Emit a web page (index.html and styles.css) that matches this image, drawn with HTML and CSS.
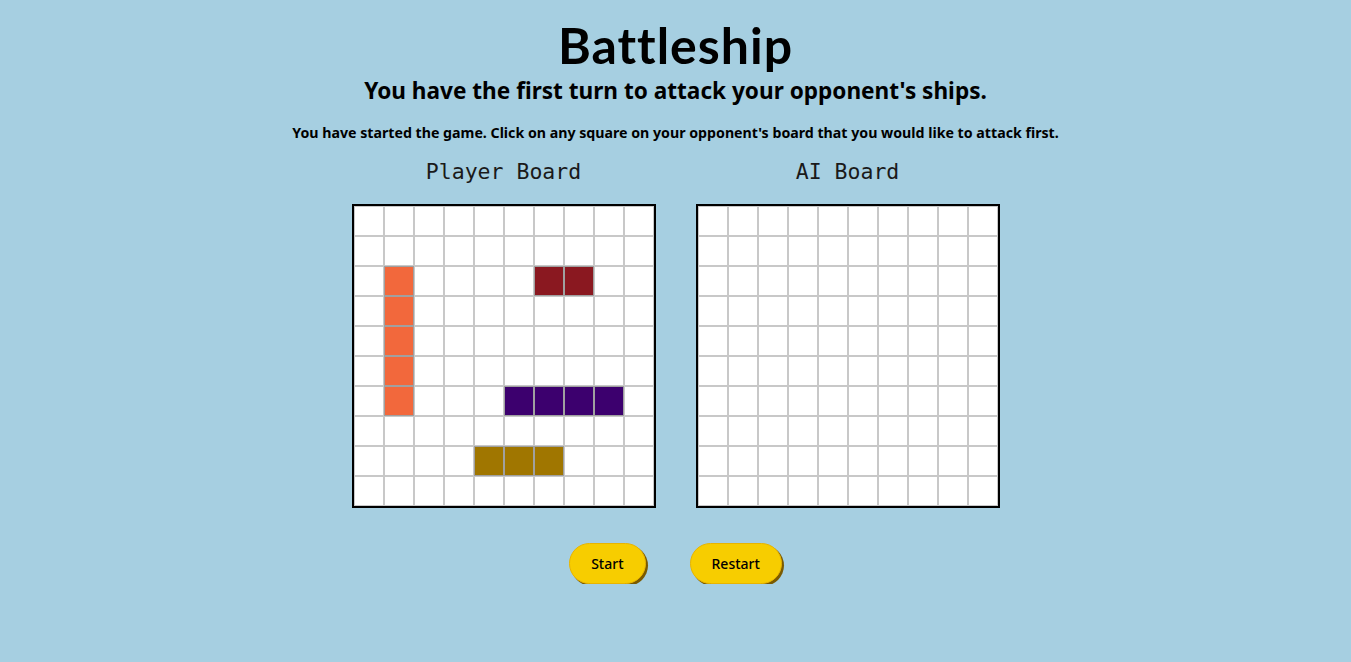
FILE: index.html
```html
<!DOCTYPE html>
<html>
<head>
<meta charset="utf-8">
<link rel="stylesheet" href="styles.css">
</head>
<body>
<main class="page">
  <h1 class="title">Battleship</h1>
  <h2 class="subtitle">You have the first turn to attack your opponent's ships.</h2>
  <p class="message">You have started the game. Click on any square on your opponent's board that you would like to attack first.</p>
  <div class="boards">
    <section class="board-wrap">
      <h3 class="board-label">Player Board</h3>
      <div class="board" id="player"></div>
    </section>
    <section class="board-wrap">
      <h3 class="board-label">AI Board</h3>
      <div class="board" id="ai"></div>
    </section>
  </div>
  <div class="buttons">
    <button class="btn">Start</button>
    <button class="btn">Restart</button>
  </div>
</main>
<script src="script.js"></script>
</body>
</html>
```
FILE: styles.css
```css
html, body {
  margin: 0;
  padding: 0;
  background: #a6cfe1;
}
.page {
  display: flex;
  flex-direction: column;
  align-items: center;
  font-family: "Noto Sans", "Lato", sans-serif;
  color: #000;
}
.title {
  margin: 14px 0 0;
  font-family: "Lato", sans-serif;
  font-size: 50px;
  font-weight: 700;
  line-height: 62px;
  letter-spacing: 1px;
}
.subtitle {
  margin: 0;
  font-size: 22.6px;
  font-weight: 700;
  line-height: 30px;
}
.message {
  margin: 18px 0 0;
  font-size: 14.2px;
  font-weight: 700;
  line-height: 18px;
}
.boards {
  display: flex;
  gap: 40px;
  margin-top: 17px;
}
.board-wrap {
  display: flex;
  flex-direction: column;
  align-items: center;
}
.board-label {
  margin: 0 0 19px;
  font-family: "DejaVu Sans Mono", monospace;
  font-weight: 400;
  font-size: 21.5px;
  line-height: 26px;
  color: #1a1a1a;
}
.board {
  display: grid;
  grid-template-columns: repeat(10, 30px);
  grid-template-rows: repeat(10, 30px);
  border: 2px solid #000;
  background: #fff;
}
.cell {
  box-sizing: border-box;
  border: 1px solid #c8c8c8;
  background: #fff;
}
.cell.ship-a { background: #f2683c; border-color: #a0a0a0; }
.cell.ship-b { background: #8a1820; border-color: #a0a0a0; }
.cell.ship-c { background: #3c006e; border-color: #a0a0a0; }
.cell.ship-d { background: #a07600; border-color: #a0a0a0; }
.buttons {
  display: flex;
  gap: 44px;
  margin-top: 35px;
}
.btn {
  font-family: "Noto Sans", sans-serif;
  font-size: 14px;
  font-weight: 500;
  color: #000;
  background: #f7cd00;
  border: 1px solid #e8b400;
  border-radius: 21px;
  height: 41px;
  padding: 0 21px;
  box-shadow: 2px 2px 0 #7a5a00;
  cursor: pointer;
}
```
FILE: script.js
```js
const ships = {
  'ship-a': [[2,1],[3,1],[4,1],[5,1],[6,1]],
  'ship-b': [[2,6],[2,7]],
  'ship-c': [[6,5],[6,6],[6,7],[6,8]],
  'ship-d': [[8,4],[8,5],[8,6]]
};
function build(id, withShips) {
  const el = document.getElementById(id);
  for (let r = 0; r < 10; r++) {
    for (let c = 0; c < 10; c++) {
      const d = document.createElement('div');
      d.className = 'cell';
      if (withShips) {
        for (const k in ships) {
          if (ships[k].some(p => p[0] === r && p[1] === c)) d.classList.add(k);
        }
      }
      el.appendChild(d);
    }
  }
}
build('player', true);
build('ai', false);
```
